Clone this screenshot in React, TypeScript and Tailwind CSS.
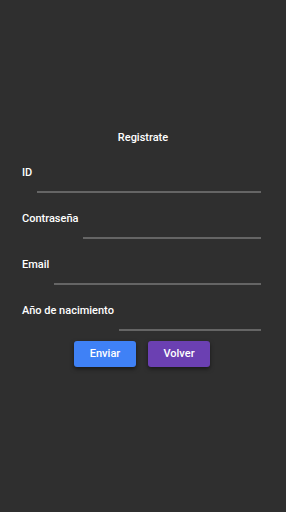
import React from 'react'

const fields = ['ID', 'Contraseña', 'Email', 'Año de nacimiento']

export default function App() {
  return (
    <div className="min-h-[512px] w-full bg-[#2f2f2f] font-['Roboto',sans-serif] text-white flex flex-col items-center pt-[130px]">
      <h1 className="text-[11px] font-medium leading-4">Registrate</h1>
      <form className="w-full pl-[22px] pr-[25px] mt-[19px] flex flex-col gap-[14px]">
        {fields.map((f) => (
          <div key={f} className="flex items-start gap-[5px] h-[32px]">
            <label className="text-[11px] font-medium leading-4 whitespace-nowrap">{f}</label>
            <input
              type="text"
              className="flex-1 min-w-0 h-[26px] mt-[2px] bg-transparent border-b-2 border-[#656565] outline-none"
            />
          </div>
        ))}
      </form>
      <div className="flex gap-3 mt-[6px] pr-[2px]">
        <button className="w-[62px] h-[26px] rounded-[3px] bg-[#3f81f6] text-[11px] font-medium shadow-[0_2px_4px_rgba(0,0,0,0.5)]">
          Enviar
        </button>
        <button className="w-[62px] h-[26px] rounded-[3px] bg-[#6b40b2] text-[11px] font-medium shadow-[0_2px_4px_rgba(0,0,0,0.5)]">
          Volver
        </button>
      </div>
    </div>
  )
}
